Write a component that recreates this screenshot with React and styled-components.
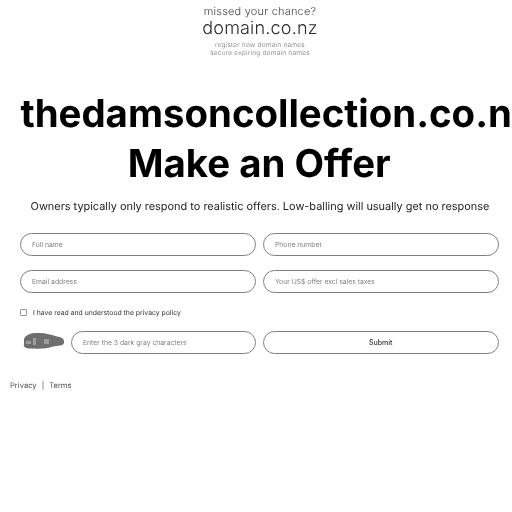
import React from "react";
import styled, { createGlobalStyle } from "styled-components";

const Global = createGlobalStyle`
  html, body { margin: 0; padding: 0; background: #fff; overflow: hidden; height: 512px; }
  body { font-family: Inter, "Liberation Sans", sans-serif; color: #000; text-rendering: geometricPrecision; }
`;

const Page = styled.div`
  width: 500px;
  padding-left: 10px;
  display: flex;
  flex-direction: column;
  overflow: hidden;
  will-change: transform;
`;

const Promo = styled.div`
  display: flex;
  flex-direction: column;
  align-items: center;
  color: #444;
  font-family: Inter, sans-serif;
  font-weight: 300;
  padding-top: 4px;
  height: 56px;
  box-sizing: border-box;
`;

const PromoLead = styled.div`
  font-size: 11px;
  line-height: 14px;
  letter-spacing: 0.2px;
`;

const PromoName = styled.div`
  font-size: 18px;
  line-height: 22px;
  letter-spacing: 0.2px;
  color: #2c2c2c;
`;

const PromoNote = styled.div`
  font-size: 6.6px;
  line-height: 8px;
  color: #777;
  letter-spacing: 0.2px;
  margin-top: ${(p) => (p.$first ? "1px" : "0")};
`;

const Title = styled.h1`
  margin: 0;
  font-size: 38.4px;
  font-weight: 700;
  line-height: 50px;
  text-align: ${(p) => (p.$left ? "left" : "center")};
  white-space: nowrap;
  padding-left: ${(p) => (p.$left ? "10.5px" : "0")};
  padding-right: ${(p) => (p.$left ? "0" : "1.5px")};
`;

const TitleBlock = styled.div`
  margin-top: 32.5px;
`;

const Lead = styled.p`
  margin: 8.5px 0 0;
  font-size: 10.93px;
  line-height: 18px;
  text-align: center;
  color: #222;
  white-space: nowrap;
`;

const Form = styled.form`
  margin: 18px 10px 0;
  display: grid;
  grid-template-columns: 235.5px 235.5px;
  column-gap: 7.5px;
`;

const Pill = styled.input`
  box-sizing: border-box;
  width: 100%;
  height: 23px;
  border: 1px solid #808080;
  border-radius: 12px;
  padding: 0 11px;
  margin-bottom: 14px;
  background: #fff;
  outline: none;
  font-family: Inter, sans-serif;
  font-size: 6.8px;
  color: #333;
  &::placeholder { color: #808080; }
`;

const Consent = styled.label`
  grid-column: 1 / 3;
  display: flex;
  align-items: center;
  gap: 6px;
  height: 10px;
  margin: 0 0 14px;
  font-size: 6.85px;
  color: #333;
`;

const Box = styled.span`
  box-sizing: border-box;
  width: 7px;
  height: 7px;
  border: 1px solid #999;
  border-radius: 1px;
  background: #fff;
`;

const CaptchaCell = styled.div`
  display: flex;
  align-items: flex-start;
  gap: 7px;
`;

const CaptchaArt = styled.svg`
  flex: none;
  width: 44px;
  height: 23px;
`;

const Submit = styled.button`
  box-sizing: border-box;
  height: 23px;
  border: 1px solid #808080;
  border-radius: 12px;
  background: #fff;
  font-family: Inter, sans-serif;
  font-size: 7px;
  font-weight: 500;
  color: #333;
  padding: 0;
`;

const Footer = styled.div`
  display: flex;
  gap: 5px;
  margin-top: 12px;
  font-size: 7.6px;
  line-height: 12px;
  color: #555;
`;

export default function App() {
  return (
    <Page>
      <Global />
      <Promo>
        <PromoLead>missed your chance?</PromoLead>
        <PromoName>domain.co.nz</PromoName>
        <PromoNote $first>register new domain names</PromoNote>
        <PromoNote>secure expiring domain names</PromoNote>
      </Promo>
      <TitleBlock>
        <Title $left>thedamsoncollection.co.nz</Title>
        <Title>Make an Offer</Title>
      </TitleBlock>
      <Lead>Owners typically only respond to realistic offers. Low-balling will usually get no response</Lead>
      <Form>
        <Pill placeholder="Full name" />
        <Pill placeholder="Phone number" />
        <Pill placeholder="Email address" />
        <Pill placeholder="Your US$ offer excl sales taxes" />
        <Consent><Box />I have read and understood the privacy policy</Consent>
        <CaptchaCell>
          <CaptchaArt viewBox="0 0 44 23">
            <defs>
              <filter id="soft"><feGaussianBlur stdDeviation="0.7" /></filter>
            </defs>
            <path filter="url(#soft)" fill="#6e6e6e" d="M4 8 C6 3 12 1.5 19 2 C26 2 32 4 37 5.5 C42 6 44.5 8 44 12 C43 15 38 14.5 33 15.5 C26 18.5 16 17.5 10 17.5 C6 17.5 3 16 4 13 Z" />
            <g filter="url(#soft)" fill="#9c9c9c">
              <rect x="6" y="10" width="5" height="3" />
              <rect x="13" y="7" width="3" height="7" />
              <rect x="24" y="8" width="5" height="5" />
            </g>
          </CaptchaArt>
          <Pill placeholder="Enter the 3 dark gray characters" />
        </CaptchaCell>
        <Submit type="button">Submit</Submit>
      </Form>
      <Footer><span>Privacy</span><span>|</span><span>Terms</span></Footer>
    </Page>
  );
}
